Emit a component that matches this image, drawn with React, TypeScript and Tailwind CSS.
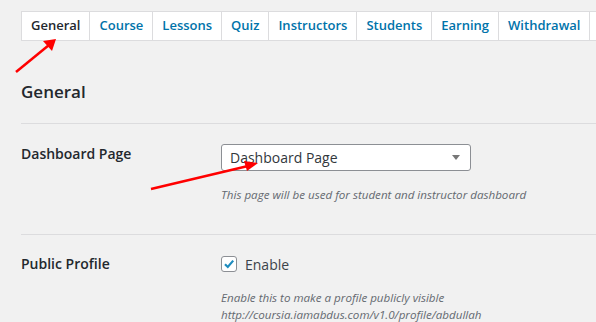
import React from 'react';

const tabs = ['General', 'Course', 'Lessons', 'Quiz', 'Instructors', 'Students', 'Earning', 'Withdrawal'];

const App: React.FC = () => {
  return (
    <div
      className="relative w-[596px] h-[322px] overflow-hidden bg-[#f1f1f1] text-[#23282d]"
      style={{ fontFamily: '"Open Sans", "Noto Sans", sans-serif' }}
    >
      <div className="pl-[21px] pt-[11px]">
        {/* tabs */}
        <div className="flex flex-nowrap whitespace-nowrap">
          {tabs.map((t, i) => (
            <div
              key={t}
              className={`h-[30px] shrink-0 flex items-center px-[9px] bg-white border border-[#dcdcde] text-[13px] font-semibold ${
                i > 0 ? 'border-l-0' : ''
              } ${i === 0 ? 'text-[#23282d]' : 'text-[#0073aa]'}`}
            >
              {t}
            </div>
          ))}
          <div className="h-[30px] w-[60px] shrink-0 bg-white border border-l-0 border-[#dcdcde]" />
        </div>

        <h2 className="mt-[39px] text-[17px] leading-[24px] font-semibold text-[#23282d]">General</h2>

        <div className="mt-[19px] border-t border-[#dcdcde]" />

        {/* dashboard page row */}
        <div className="flex pt-[20px] pb-[31px]">
          <div className="w-[200px] text-[14px] font-semibold leading-[20px]">Dashboard Page</div>
          <div>
            <div className="w-[250px] h-[27px] bg-white border border-[#8c8f94] rounded-[3px] flex items-center justify-between pl-[8px] pr-[10px] text-[14px] text-[#32373c]">
              <span>Dashboard Page</span>
              <span className="w-0 h-0 border-l-[4px] border-r-[4px] border-t-[5px] border-l-transparent border-r-transparent border-t-[#777]" />
            </div>
            <p className="mt-[15px] text-[11.6px] italic text-[#646970] leading-[17px]">
              This page will be used for student and instructor dashboard
            </p>
          </div>
        </div>

        <div className="border-t border-[#dcdcde]" />

        {/* public profile row */}
        <div className="flex pt-[19px]">
          <div className="w-[200px] text-[14px] font-semibold leading-[20px]">Public Profile</div>
          <div>
            <div className="flex items-center h-[20px]">
              <span className="w-[16px] h-[16px] bg-white border border-[#8c8f94] rounded-[3px] flex items-center justify-center">
                <svg width="12" height="12" viewBox="0 0 12 12">
                  <path d="M2 6.2 L4.8 9 L10.2 2.6" fill="none" stroke="#1e8cbe" strokeWidth="2.2" />
                </svg>
              </span>
              <span className="ml-[8px] text-[14px] text-[#3c434a]">Enable</span>
            </div>
            <p className="mt-[15px] text-[11.6px] italic text-[#646970] leading-[17px]">
              Enable this to make a profile publicly visible
              <br />
              http://coursia.iamabdus.com/v1.0/profile/abdullah
            </p>
          </div>
        </div>
      </div>

      {/* red annotation arrows */}
      <svg className="absolute left-0 top-0 pointer-events-none" width="596" height="322">
        <line x1="16" y1="72" x2="49" y2="45" stroke="#f00" strokeWidth="2.5" />
        <polygon points="56,39 52,51 43,41" fill="#f00" />
        <line x1="151" y1="189" x2="248" y2="166" stroke="#f00" strokeWidth="2.5" />
        <polygon points="258,163 247,171 244,161" fill="#f00" />
      </svg>
    </div>
  );
};

export default App;
